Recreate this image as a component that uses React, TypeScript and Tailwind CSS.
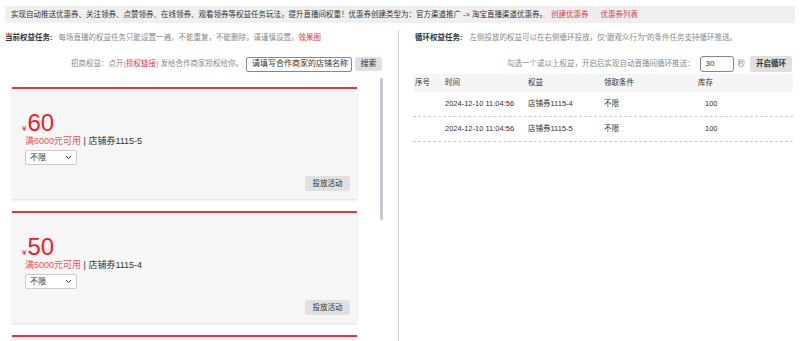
import React from "react";

const coupons = [
  { amount: "60", limit: "满6000元可用", name: "店铺券1115-5" },
  { amount: "50", limit: "满5000元可用", name: "店铺券1115-4" },
  { amount: "40", limit: "满4000元可用", name: "店铺券1115-3" },
];

const rows = [
  { time: "2024-12-10 11:04:56", name: "店铺券1115-4", cond: "不限", stock: "100" },
  { time: "2024-12-10 11:04:56", name: "店铺券1115-5", cond: "不限", stock: "100" },
];

const CouponCard: React.FC<{ amount: string; limit: string; name: string }> = ({ amount, limit, name }) => (
  <div className="h-[112px] shrink-0 border-t-2 border-[#e8343f] bg-[#f6f6f6] shadow-[0_1px_2px_rgba(0,0,0,0.15)] pl-[10px] pr-[7px] pt-[21px] flex flex-col">
    <div className="h-[25px] flex items-baseline text-[#f01c2c]">
      <span className="text-[8px] leading-none mr-[1px]">¥</span>
      <span className="text-[24px] leading-[25px]">{amount}</span>
    </div>
    <div className="pl-[3px] text-[9px] leading-[12px] text-[#333]">
      <span className="text-[#f0504f]">{limit}</span> | {name}
    </div>
    <div className="pl-[3px] mt-[3px]">
      <div className="w-[52px] h-[15px] bg-white border border-[#ccc] rounded-[2px] flex items-center justify-between px-[4px] text-[8px] text-[#333]">
        <span>不限</span>
        <svg width="7" height="5" viewBox="0 0 7 5" fill="none" stroke="#333" strokeWidth="1">
          <path d="M1 1l2.5 2.5L6 1" />
        </svg>
      </div>
    </div>
    <div className="flex justify-end mt-[11px]">
      <button className="h-[15px] w-[45px] bg-[#e0e0e0] rounded-[3px] text-[7.5px] text-[#333] leading-[15px]">投放活动</button>
    </div>
  </div>
);

export default function App() {
  return (
    <div
      className="w-[800px] h-[341px] overflow-hidden bg-white text-[7.5px] text-[#333]"
      style={{ fontFamily: '"Liberation Sans", "Noto Sans CJK SC", sans-serif' }}
    >
      {/* Top notice */}
      <div className="px-[5px] pt-[6px]">
        <div className="h-[17px] bg-[#efefef] px-[6px] flex items-center whitespace-nowrap text-[#333]">
          实现自动推送优惠券、关注领券、点赞领券、在线领券、观看领券等权益任务玩法，提升直播间权重！优惠券创建类型为：官方渠道推广 -&gt; 淘宝直播渠道优惠券。
          <span className="text-[#e8343f] ml-[4px]">创建优惠券</span>
          <span className="text-[#ddd] mx-[5px]">|</span>
          <span className="text-[#e8343f]">优惠券列表</span>
        </div>
      </div>

      <div className="flex h-[318px]">
        {/* Left panel */}
        <div className="w-[399px] shrink-0 border-r border-[#ccc] mt-[7px] flex flex-col">
          <div className="h-[15px] flex items-center pl-[5px] whitespace-nowrap">
            <span className="font-bold text-[#333]">当前权益任务:</span>
            <span className="ml-[6px] text-[#888]">每场直播的权益任务只能设置一遍，不能重复，不能删除，请谨慎设置。</span>
            <span className="text-[#e8343f]">效果图</span>
          </div>
          <div className="flex items-center justify-end pr-[16px] mt-[11px] h-[16px] whitespace-nowrap">
            <span className="text-[#888]">
              招商权益：点开(<span className="text-[#e8343f]">授权链接</span>) 发给合作商家授权给你。
            </span>
            <div className="ml-[3px] w-[106px] h-[15px] border border-[#888] rounded-[2px] flex items-center px-[5px] text-[8px] text-[#333]">
              请填写合作商家的店铺名称
            </div>
            <button className="ml-[3px] h-[14px] w-[27px] bg-[#e0e0e0] rounded-[2px] text-[8px] text-[#333] leading-[14px]">搜索</button>
          </div>
          <div className="flex mt-[6px] flex-1 overflow-hidden">
            <div className="ml-[12px] w-[345px] pt-[9px] flex flex-col gap-[12px]">
              {coupons.map((c) => (
                <CouponCard key={c.name} {...c} />
              ))}
            </div>
            <div className="ml-[23px] w-[3px] h-[142px] bg-[#c5cad3] rounded-[1px]" />
          </div>
        </div>

        {/* Right panel */}
        <div className="flex-1 mt-[7px] flex flex-col">
          <div className="h-[15px] flex items-center pl-[16px] whitespace-nowrap">
            <span className="font-bold text-[#333]">循环权益任务:</span>
            <span className="ml-[7px] text-[#888]">左侧投放的权益可以在右侧循环投放，仅“跟观众行为”的条件任务支持循环推送。</span>
          </div>
          <div className="flex items-center justify-end pr-[8px] mt-[10px] h-[17px] whitespace-nowrap">
            <span className="text-[#888]">勾选一个或以上权益，开启后实现自动直播间循环推送：</span>
            <div className="ml-[5px] w-[34px] h-[16px] border border-[#888] rounded-[3px] flex items-center px-[5px] text-[8px] text-[#333]">30</div>
            <span className="ml-[4px] text-[#888]">秒</span>
            <button className="ml-[5px] h-[16px] w-[42px] bg-[#e0e0e0] rounded-[2px] font-bold text-[#333] leading-[16px]">开启循环</button>
          </div>
          <div className="ml-[14px] mr-[7px] mt-[2px]">
            <div className="h-[18px] bg-[#f5f5f5] flex items-center text-[#333]">
              <span className="w-[32px] pl-[2px]">序号</span>
              <span className="w-[83px]">时间</span>
              <span className="w-[76px]">权益</span>
              <span className="w-[94px]">领取条件</span>
              <span>库存</span>
            </div>
            {rows.map((r) => (
              <div key={r.name} className="h-[25px] border-b border-dashed border-[#ccc] flex items-center text-[#333]">
                <span className="w-[32px]" />
                <span className="w-[83px]">{r.time}</span>
                <span className="w-[76px]">{r.name}</span>
                <span className="w-[94px]">{r.cond}</span>
                <span className="pl-[7px]">{r.stock}</span>
              </div>
            ))}
          </div>
        </div>
      </div>
    </div>
  );
}
